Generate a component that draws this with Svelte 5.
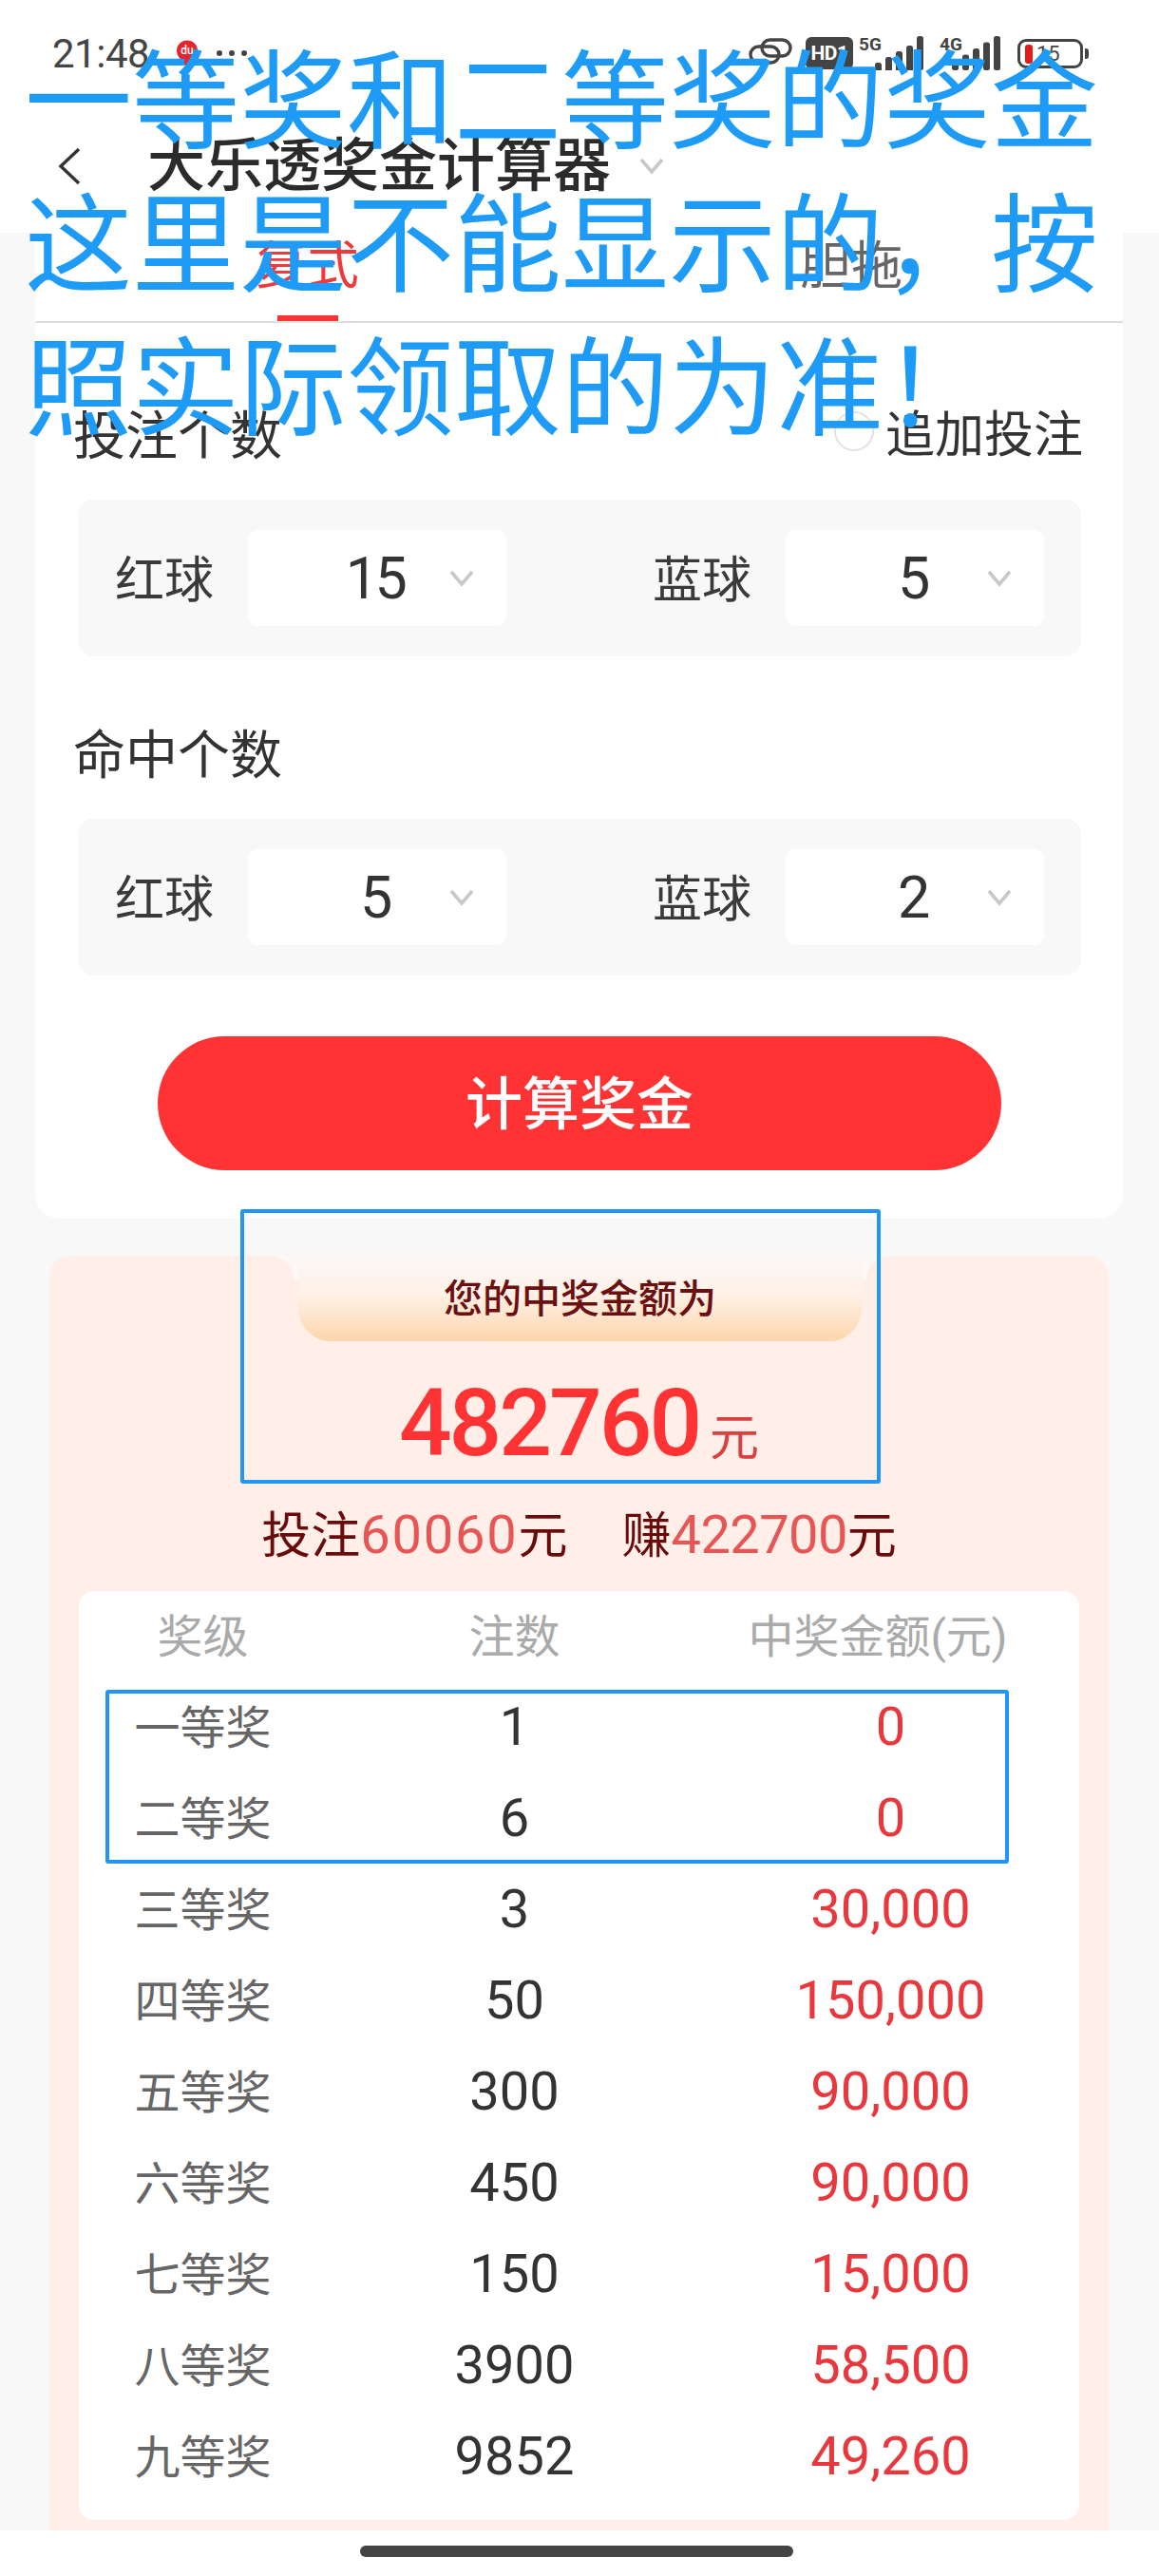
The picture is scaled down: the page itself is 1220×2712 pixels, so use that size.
<script lang="ts">
  // ── Data ───────────────────────────────────────────────────────────────────
  const pickers = [
    { title: '投注个数', red: '15', blue: '5', extra: true },
    { title: '命中个数', red: '5', blue: '2', extra: false },
  ]

  const prizes = [
    ['一等奖', '1', '0'],
    ['二等奖', '6', '0'],
    ['三等奖', '3', '30,000'],
    ['四等奖', '50', '150,000'],
    ['五等奖', '300', '90,000'],
    ['六等奖', '450', '90,000'],
    ['七等奖', '150', '15,000'],
    ['八等奖', '3900', '58,500'],
    ['九等奖', '9852', '49,260'],
  ]

  const bars = [0, 1, 2, 3, 4]
</script>

{#snippet chevron()}
  <svg class="chev" viewBox="0 0 26 18" width="26" height="18">
    <path d="M2 2 L13 15 L24 2" fill="none" stroke="currentColor" stroke-width="3.6" />
  </svg>
{/snippet}

{#snippet net(label: string)}
  <svg class="net" viewBox="0 0 70 36" width="70" height="36">
    <text x={label === '5G' ? 0 : 4} y="15" class="net-label">{label}</text>
    {#each bars as i}
      <rect x={17 + i * 11} y={label === '5G' && i < 4 ? 28 - i * 6 : 26 - i * 6.5} width="7" height={10 + i * 6.5} rx="2.5" fill="#444" />
    {/each}
  </svg>
{/snippet}

<div class="page">
  <!-- Status bar + nav -->
  <header class="head">
    <div class="status">
      <div class="status-left">
        <span class="time">21:48</span>
        <svg class="pin" viewBox="0 0 24 32" width="24" height="32">
          <path d="M12 31 L4 20 A11 11 0 1 1 20 20 Z" fill="#e5252b" />
          <text x="12" y="16" class="pin-text" text-anchor="middle">du</text>
        </svg>
        <span class="dots"><i></i><i></i><i></i></span>
      </div>
      <div class="status-right">
        <svg class="link" viewBox="0 0 46 28" width="46" height="28">
          <g fill="none" stroke="#444" stroke-width="3.4">
            <rect x="14" y="2" width="30" height="17" rx="8.500" />
            <rect x="2" y="9" width="30" height="17" rx="8.500" />
          </g>
        </svg>
        <span class="hd">HD1</span>
        {@render net('5G')}
        {@render net('4G')}
        <span class="battery">
          <span class="battery-body"><i></i><b>15</b></span>
          <span class="battery-nub"></span>
        </span>
      </div>
    </div>
    <div class="nav">
      <svg class="back" viewBox="0 0 26 40" width="26" height="40">
        <path d="M23 2 L4 20 L23 38" fill="none" stroke="#333" stroke-width="3.4" />
      </svg>
      <h1>大乐透奖金计算器</h1>
      <span class="nav-chev">{@render chevron()}</span>
    </div>
  </header>

  <!-- Form card -->
  <section class="card">
    <div class="tabs">
      <span class="tab active">复式</span>
      <span class="tab">胆拖</span>
    </div>

    {#each pickers as p}
      <div class="label-row">
        <span>{p.title}</span>
        {#if p.extra}
          <span class="extra"><i class="radio"></i>追加投注</span>
        {/if}
      </div>
      <div class="picker">
        <div class="pick">
          <span class="pick-name">红球</span>
          <div class="select"><span class="select-val">{p.red}</span>{@render chevron()}</div>
        </div>
        <div class="pick">
          <span class="pick-name">蓝球</span>
          <div class="select"><span class="select-val">{p.blue}</span>{@render chevron()}</div>
        </div>
      </div>
    {/each}

    <button class="calc">计算奖金</button>
  </section>

  <!-- Result -->
  <section class="result">
    <div class="ribbon">您的中奖金额为</div>
    <div class="amount"><b>482760</b><span>元</span></div>
    <div class="stake">
      <span>投注<em class="wide">60060</em>元</span>
      <span>赚<em class="tight">422700</em>元</span>
    </div>
    <div class="table">
      <div class="row thead">
        <span>奖级</span><span>注数</span><span class="th-money">中奖金额(元)</span>
      </div>
      {#each prizes as [level, count, money]}
        <div class="row">
          <span class="level">{level}</span><span class="count">{count}</span><span class="money">{money}</span>
        </div>
      {/each}
    </div>
  </section>

  <footer class="bottom"><span class="home"></span></footer>

  <!-- Annotations drawn over the screenshot -->
  <div class="note">一等奖和二等奖的奖金这里是不能显示的，按照实际领取的为准！</div>
  <div class="mark mark-amount"></div>
  <div class="mark mark-rows"></div>
</div>

<style>
  :global(body) {
    margin: 0;
    background: #f8f8f8;
  }

  .page {
    position: relative;
    width: 1220px;
    height: 2712px;
    overflow: hidden;
    background: #f8f8f8;
    font-family: Roboto, "Noto Sans CJK SC", sans-serif;
    color: #333;
  }

  /* ── Head ── */
  .head {
    height: 245px;
    background: #fff;
  }

  .status {
    display: flex;
    justify-content: space-between;
    height: 108px;
    padding: 38px 74px 0 55px;
    box-sizing: border-box;
  }
  .status-left,
  .status-right {
    display: flex;
    align-items: flex-start;
  }
  .time {
    font-size: 42px;
    line-height: 38px;
    color: #444;
    letter-spacing: -0.5px;
  }
  .pin {
    margin: 3px 0 0 28px;
  }
  .pin-text {
    font: 500 12px Roboto, sans-serif;
    fill: #fff;
  }
  .dots {
    display: flex;
    gap: 7px;
    margin: 15px 0 0 19px;
  }
  .dots i {
    width: 6px;
    height: 6px;
    border-radius: 50%;
    background: #444;
  }
  .link {
    margin-top: 2px;
  }
  .hd {
    width: 50px;
    height: 34px;
    margin: 1px 6px 0 14px;
    background: #444;
    border-radius: 6px;
    color: #fff;
    font: 700 21px/34px Roboto, sans-serif;
    text-align: center;
    letter-spacing: -0.5px;
  }
  .net {
    margin-right: 11px;
  }
  .net-label {
    font: 700 19px Roboto, sans-serif;
    fill: #444;
  }
  .battery {
    display: flex;
    align-items: center;
    margin: 3px 0 0 5px;
  }
  .battery-body {
    display: flex;
    align-items: center;
    gap: 4px;
    width: 69px;
    height: 31px;
    padding-left: 5px;
    box-sizing: border-box;
    border: 3px solid #444;
    border-radius: 9px;
  }
  .battery-body i {
    width: 8px;
    height: 20px;
    border-radius: 3px;
    background: #e21b1b;
  }
  .battery-body b {
    font: 400 22px/25px Roboto, sans-serif;
    color: #444;
  }
  .battery-nub {
    width: 4px;
    height: 11px;
    margin-left: 2px;
    border-radius: 0 3px 3px 0;
    background: #444;
  }

  .nav {
    display: flex;
    align-items: center;
    height: 60px;
    margin-top: 37px;
    padding-left: 60px;
  }
  .nav h1 {
    margin: 0 0 0 69px;
    font-size: 61px;
    font-weight: 500;
    line-height: 60px;
    color: #2b2b2b;
  }
  .nav-chev {
    display: flex;
    margin-left: 30px;
  }
  .chev {
    color: #c8c8c8;
  }

  /* ── Card ── */
  .card {
    width: 1145px;
    height: 1038px;
    margin-left: 37px;
    padding-bottom: 50px;
    box-sizing: border-box;
    background: #fff;
    border-radius: 0 0 26px 26px;
  }
  .tabs {
    display: flex;
    height: 95px;
    border-bottom: 2px solid #dedede;
    box-sizing: border-box;
  }
  .tab {
    position: relative;
    width: 572px;
    font-size: 54px;
    line-height: 72px;
    text-align: center;
    color: #666;
  }
  .tab:first-child {
    width: 574px;
  }
  .tab.active {
    color: #ee3a3a;
  }
  .tab.active::after {
    content: '';
    position: absolute;
    left: 255px;
    bottom: 0;
    width: 64px;
    height: 6px;
    background: #f63535;
  }

  .label-row {
    display: flex;
    justify-content: space-between;
    align-items: center;
    height: 80px;
    padding: 0 42px 5px 40px;
    box-sizing: border-box;
    font-size: 55px;
    color: #333;
  }
  .tabs + .label-row {
    margin-top: 76px;
  }
  .picker + .label-row {
    margin-top: 61px;
  }
  .extra {
    display: flex;
    align-items: center;
    font-size: 52px;
  }
  .radio {
    width: 38px;
    height: 38px;
    margin-right: 12px;
    border: 2px solid #e2e2e2;
    border-radius: 50%;
  }

  .picker {
    display: flex;
    justify-content: space-between;
    align-items: center;
    height: 165px;
    margin: 30px 44px 0 45px;
    padding: 0 39px 0 39px;
    box-sizing: border-box;
    background: #f8f8f8;
    border-radius: 16px;
  }
  .pick {
    display: flex;
    align-items: center;
    justify-content: space-between;
    width: 412px;
  }
  .pick-name {
    padding-bottom: 5px;
    font-size: 52px;
    color: #3a3a3a;
  }
  .select {
    display: grid;
    grid-template-columns: 1fr auto 1fr;
    align-items: center;
    width: 272px;
    height: 101px;
    background: #fff;
    border-radius: 10px;
  }
  .select-val {
    grid-column: 2;
    margin-right: 5px;
    font-size: 61px;
    letter-spacing: -3.500px;
    color: #333;
  }
  .select .chev {
    justify-self: end;
    margin-right: 34px;
  }

  .calc {
    display: block;
    width: 888px;
    height: 141px;
    margin: 64px 0 0 129px;
    padding: 0 0 9px;
    border: 0;
    border-radius: 71px;
    background: #ff3333;
    color: #fff;
    font-family: inherit;
    font-size: 60px;
    font-weight: 500;
  }

  /* ── Result ── */
  .result {
    width: 1115px;
    height: 1342px;
    margin: 39px 0 0 52px;
    background: #ffefe8;
    border-radius: 22px 22px 0 0;
  }
  .ribbon {
    position: relative;
    width: 593px;
    height: 90px;
    margin-left: 262px;
    background: linear-gradient(#fbf8f6 0%, #fff1e7 45%, #fdd6ab 100%);
    border-radius: 0 0 34px 34px;
    font-size: 41px;
    font-weight: 500;
    line-height: 92px;
    text-align: center;
    color: #6b0f0f;
  }
  .ribbon::before,
  .ribbon::after {
    content: '';
    position: absolute;
    top: 0;
    width: 30px;
    height: 26px;
  }
  .ribbon::before {
    left: -30px;
    background: radial-gradient(circle at 0 100%, transparent 25px, #fbf8f6 26px);
  }
  .ribbon::after {
    right: -30px;
    background: radial-gradient(circle at 100% 100%, transparent 25px, #fbf8f6 26px);
  }

  .amount {
    display: flex;
    justify-content: center;
    align-items: baseline;
    gap: 11px;
    height: 136px;
    margin-top: 19px;
    color: #ff3333;
  }
  .amount b {
    font-size: 98px;
    font-weight: 500;
    line-height: 136px;
    letter-spacing: -3px;
  }
  .amount span {
    font-size: 52px;
    color: #d9403f;
  }

  .stake {
    display: flex;
    justify-content: center;
    gap: 57px;
    height: 64px;
    margin-top: 17px;
    font-size: 52px;
    line-height: 64px;
    color: #6a0b0b;
  }
  .stake em {
    font-size: 56px;
    font-style: normal;
    color: #e85555;
  }
  .stake .wide {
    letter-spacing: 1.800px;
  }
  .stake .tight {
    letter-spacing: -0.600px;
  }

  .table {
    width: 1053px;
    height: 978px;
    margin: 27px 0 0 31px;
    background: #fff;
    border-radius: 16px;
  }
  .row {
    display: grid;
    grid-template-columns: 261px 395px 397px;
    align-items: center;
    height: 96px;
    text-align: center;
  }
  .thead {
    height: 95px;
    padding-bottom: 8px;
    box-sizing: border-box;
    font-size: 48px;
    color: #aaa;
  }
  .th-money {
    padding-right: 27px;
  }
  .level {
    padding-bottom: 6px;
    font-size: 48px;
    color: #666;
  }
  .count {
    font-size: 56px;
    color: #333;
  }
  .money {
    font-size: 56px;
    color: #e8383d;
  }

  .bottom {
    display: flex;
    justify-content: center;
    height: 48px;
    padding: 16px 6px 0 0;
    box-sizing: border-box;
    background: #fff;
  }
  .home {
    width: 456px;
    height: 12px;
    border-radius: 6px;
    background: #444;
  }

  /* ── Annotations ── */
  .note {
    position: absolute;
    left: 26px;
    top: 33px;
    width: 1135px;
    font-size: 113px;
    line-height: 151px;
    color: #1e9bf7;
  }
  .mark {
    position: absolute;
    box-sizing: border-box;
    border: 4px solid #2196f8;
    border-radius: 3px;
  }
  .mark-amount {
    left: 253px;
    top: 1273px;
    width: 674px;
    height: 289px;
  }
  .mark-rows {
    left: 111px;
    top: 1779px;
    width: 951px;
    height: 183px;
  }
</style>
